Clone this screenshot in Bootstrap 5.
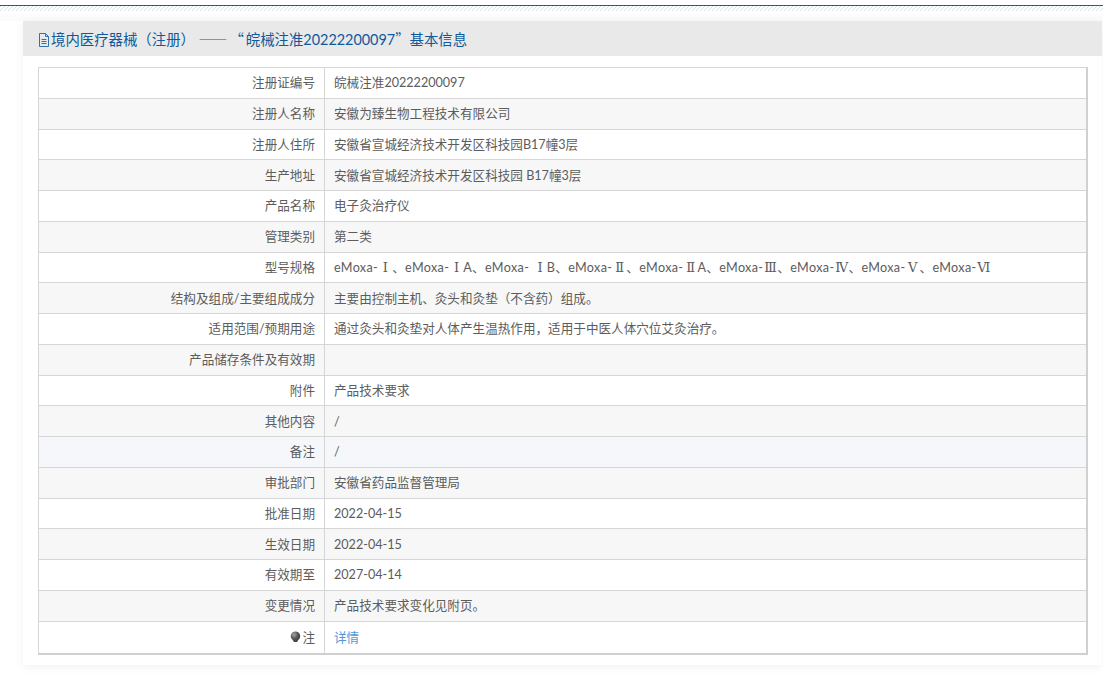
<!DOCTYPE html>
<html lang="zh-CN">
<head>
<meta charset="utf-8">
<title>境内医疗器械（注册）</title>
<link href="https://cdn.jsdelivr.net/npm/bootstrap@5.3.0/dist/css/bootstrap.min.css" rel="stylesheet">
<style>
html,body{height:100%;overflow:hidden}
body{background:#fff;font-family:Lato,"Noto Sans CJK SC",sans-serif;font-size:12.6px;color:#5c5c5c}
.top-strip{margin-top:5px;height:16px;border-top:1px solid #17668f;background:repeating-linear-gradient(135deg,#dce4e8 0 .9px,#fff .9px 2.83px) top/100% 5px no-repeat,linear-gradient(#fff 30%,#fafafa)}
.info-panel{margin:0 1px 0 23px;height:644px;background:#fff;box-shadow:0 2px 10px rgba(0,0,0,.06)}
.panel-head{height:35px;background:#e9e9e9;color:#0f5a9c;padding-left:15px;font-size:14.4px;line-height:35px;white-space:nowrap}
.panel-head svg{vertical-align:-2px;margin-right:1px}
.cjk-run{font-family:"Noto Sans CJK SC",sans-serif}
.dash-run{letter-spacing:2px}
.panel-body{padding:11px 15px 0}
.info-table{margin:0;width:1050px;border-collapse:collapse;border:1px solid #d0d0d0;border-right-width:2px;border-bottom-width:2px;table-layout:fixed;--bs-table-color:#5c5c5c}
.info-table td{height:30.75px;padding:1px 9px 0;border:1px solid #d6d6d6;vertical-align:middle;line-height:20px;font-size:12.6px;color:#5c5c5c}
.info-table td:first-child{width:286px;text-align:right}
.info-table tr:nth-child(even)>td{background-color:#f7f7f7}
.info-table tr.tint-row>td{background-color:#f5f7fb}
.info-table tr:last-child>td{height:32.5px}
.detail-link{color:#4f97dc;text-decoration:none}
.bulb{vertical-align:-1px;margin-right:1px}
.model-list{letter-spacing:.35px}
.roman{font-family:"DejaVu Serif",serif;font-size:13px;letter-spacing:-.5px;display:inline-block;min-width:14px;text-align:center}
</style>
</head>
<body>
<div class="top-strip"></div>
<div class="info-panel">
  <div class="panel-head">
    <svg width="12" height="14" viewBox="0 0 12 14" fill="none" stroke="#2f74b0" stroke-width="1"><path d="M1.5 .5h6l3 3v10h-9z"/><path d="M7.5 .5v3h3M3.5 6.5h5M3.5 8.5h5M3.5 10.5h5"/></svg>境内医疗器械（注册） <span class="cjk-run dash-run">——“</span>皖械注准20222200097<span class="cjk-run">”</span>基本信息
  </div>
  <div class="panel-body">
    <table class="table table-bordered info-table">
      <tbody>
        <tr><td>注册证编号</td><td>皖械注准20222200097</td></tr>
        <tr><td>注册人名称</td><td>安徽为臻生物工程技术有限公司</td></tr>
        <tr><td>注册人住所</td><td>安徽省宣城经济技术开发区科技园B17幢3层</td></tr>
        <tr><td>生产地址</td><td>安徽省宣城经济技术开发区科技园 B17幢3层</td></tr>
        <tr><td>产品名称</td><td>电子灸治疗仪</td></tr>
        <tr><td>管理类别</td><td>第二类</td></tr>
        <tr><td>型号规格</td><td class="model-list">eMoxa-<span class="roman">Ⅰ</span>、eMoxa-<span class="roman">Ⅰ</span>A、eMoxa- <span class="roman">Ⅰ</span>B、eMoxa-<span class="roman">Ⅱ</span>、eMoxa-<span class="roman">Ⅱ</span>A、eMoxa-<span class="roman">Ⅲ</span>、eMoxa-<span class="roman">Ⅳ</span>、eMoxa-<span class="roman">Ⅴ</span>、eMoxa-<span class="roman">Ⅵ</span></td></tr>
        <tr><td>结构及组成/主要组成成分</td><td>主要由控制主机、灸头和灸垫（不含药）组成。</td></tr>
        <tr><td>适用范围/预期用途</td><td>通过灸头和灸垫对人体产生温热作用，适用于中医人体穴位艾灸治疗。</td></tr>
        <tr><td>产品储存条件及有效期</td><td></td></tr>
        <tr><td>附件</td><td>产品技术要求</td></tr>
        <tr><td>其他内容</td><td>/</td></tr>
        <tr class="tint-row"><td>备注</td><td>/</td></tr>
        <tr><td>审批部门</td><td>安徽省药品监督管理局</td></tr>
        <tr><td>批准日期</td><td>2022-04-15</td></tr>
        <tr><td>生效日期</td><td>2022-04-15</td></tr>
        <tr><td>有效期至</td><td>2027-04-14</td></tr>
        <tr><td>变更情况</td><td>产品技术要求变化见附页。</td></tr>
        <tr><td><svg class="bulb" width="11" height="12" viewBox="0 0 11 12"><defs><radialGradient id="bulbFill" cx=".35" cy=".3" r=".8"><stop offset="0" stop-color="#a5a5a5"/><stop offset=".5" stop-color="#555"/><stop offset="1" stop-color="#3c3c3c"/></radialGradient></defs><path d="M5.5 .5a4.7 4.7 0 0 1 3 8.3L7 11H4L2.5 8.8a4.7 4.7 0 0 1 3-8.3z" fill="url(#bulbFill)"/></svg>注</td><td><a class="detail-link" href="#">详情</a></td></tr>
      </tbody>
    </table>
  </div>
</div>
<script src="https://cdn.jsdelivr.net/npm/bootstrap@5.3.0/dist/js/bootstrap.bundle.min.js"></script>
</body>
</html>
